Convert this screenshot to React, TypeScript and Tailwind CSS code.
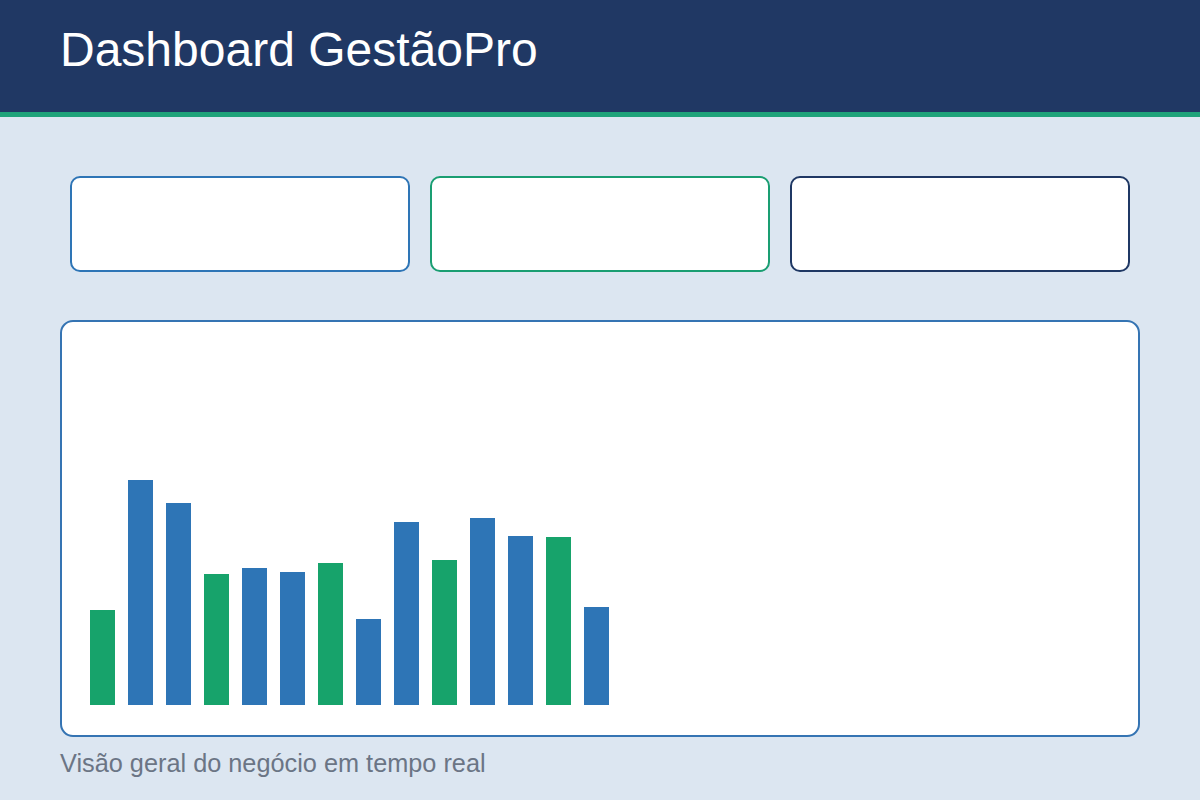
const BARS: { h: number; tone: 'blue' | 'green' }[] = [
  { h: 95, tone: 'green' },
  { h: 225, tone: 'blue' },
  { h: 202, tone: 'blue' },
  { h: 131, tone: 'green' },
  { h: 137, tone: 'blue' },
  { h: 133, tone: 'blue' },
  { h: 142, tone: 'green' },
  { h: 86, tone: 'blue' },
  { h: 183, tone: 'blue' },
  { h: 145, tone: 'green' },
  { h: 187, tone: 'blue' },
  { h: 169, tone: 'blue' },
  { h: 168, tone: 'green' },
  { h: 98, tone: 'blue' },
];

const TONE: Record<'blue' | 'green', string> = {
  blue: 'bg-[#2e75b6]',
  green: 'bg-[#17a36b]',
};

const CARD_BORDERS = ['border-[#2e75b6]', 'border-[#1a9e72]', 'border-[#1f3864]'];

export default function App() {
  return (
    <div className="min-h-[800px] bg-[#dce6f1] font-['Liberation_Sans',Arial,sans-serif]">
      <header className="h-[117px] border-b-[5px] border-[#1fa37a] bg-[#203864] px-[60px] pt-[22px]">
        <h1 className="text-[48px] leading-[1.15] text-white">Dashboard GestãoPro</h1>
      </header>

      <main className="px-[60px] pt-[59px]">
        <div className="grid grid-cols-3 gap-5 px-[10px]">
          {CARD_BORDERS.map((border) => (
            <div
              key={border}
              className={['h-[96px] rounded-[10px] border-2 bg-white', border].join(' ')}
            />
          ))}
        </div>

        <section className="mt-[48px] flex h-[417px] items-end gap-[13px] rounded-[13px] border-2 border-[#3574b3] bg-white pb-[30px] pl-[28px]">
          {BARS.map((bar, i) => (
            <div key={i} className={['w-[25px]', TONE[bar.tone]].join(' ')} style={{ height: bar.h }} />
          ))}
        </section>

        <p className="mt-[12px] text-[25.3px] leading-[1.15] text-[#6b7585]">
          Visão geral do negócio em tempo real
        </p>
      </main>
    </div>
  );
}
